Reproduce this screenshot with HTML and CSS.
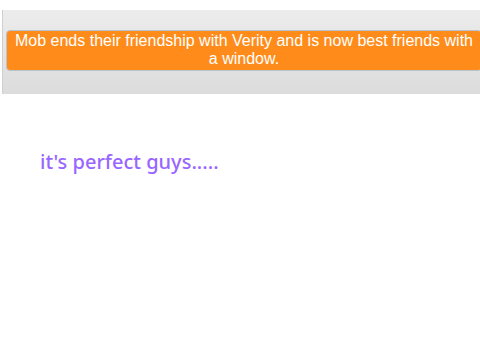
FILE: index.html
```html
<!DOCTYPE html>
<html>
<head>
<meta charset="utf-8">
<link rel="stylesheet" href="styles.css">
</head>
<body>
<div class="page">
  <div class="banner">
    <div class="notice">Mob ends their friendship with Verity and is now best friends with a window.</div>
  </div>
  <p class="caption">it's perfect guys.....</p>
</div>
</body>
</html>
```
FILE: styles.css
```css
html, body {
  margin: 0;
  padding: 0;
  background: #ffffff;
  overflow: hidden;
}
.page {
  width: 480px;
  height: 360px;
  overflow: hidden;
}
.banner {
  margin: 10px 0 0 2px;
  width: 500px;
  border-left: 1px solid #cfcfcf;
  background: linear-gradient(#ececec, #dcdcdc);
  padding: 20px 0 23px 3px;
  box-sizing: border-box;
}
.notice {
  width: 476px;
  box-sizing: border-box;
  background: #ff8c1a;
  border: 1px solid #b9c3cc;
  border-radius: 4px;
  color: #ffffff;
  font-family: "Liberation Sans", Arial, sans-serif;
  font-size: 16px;
  line-height: 18px;
  text-align: center;
  padding: 1px 2px 2px;
}
.caption {
  margin: 54px 0 0 40px;
  font-family: "Noto Sans", sans-serif;
  font-weight: 500;
  font-size: 20px;
  color: #9966ff;
}
```
